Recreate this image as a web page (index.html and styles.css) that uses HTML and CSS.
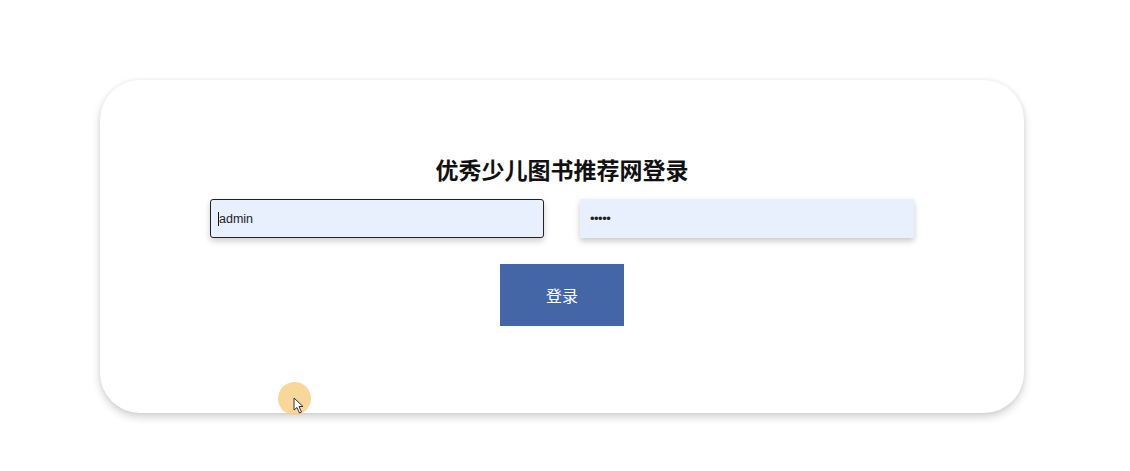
FILE: index.html
```html
<!DOCTYPE html>
<html lang="zh">
<head>
<meta charset="utf-8">
<link rel="stylesheet" href="styles.css">
</head>
<body>
<div class="page">
  <div class="card">
    <h1 class="title">优秀少儿图书推荐网登录</h1>
    <div class="fields">
      <div class="input focused"><span class="caret"></span>admin</div>
      <div class="input pw">•••••</div>
    </div>
    <button class="btn">登录</button>
  </div>
  <div class="cursor-hl">
    <svg class="arrow" width="12" height="17" viewBox="0 0 12 17"><path d="M1 1 L1 13 L4 10.5 L6.5 16 L8.5 15 L6 9.5 L10 9.5 Z" fill="#fff" stroke="#333" stroke-width="1"/></svg>
  </div>
</div>
</body>
</html>
```
FILE: styles.css
```css
html, body { margin: 0; padding: 0; background: #fff; }
body { font-family: "Liberation Sans", "Noto Sans CJK SC", sans-serif; }
.page { position: relative; width: 1130px; height: 471px; padding-top: 80px; padding-left: 100px; box-sizing: border-box; }
.card {
  width: 924px; height: 333px; box-sizing: border-box;
  background: #fff; border-radius: 40px;
  box-shadow: 0 4px 8px rgba(0,0,0,0.18), 0 0 4px rgba(0,0,0,0.06);
  display: flex; flex-direction: column; align-items: center;
  padding-top: 74px;
}
.title { margin: 0; font-size: 23px; line-height: 30px; font-weight: bold; color: #111; font-family: "Noto Sans CJK SC", sans-serif; }
.fields { display: flex; gap: 36px; margin-top: 15px; }
.input {
  width: 334px; height: 39px; box-sizing: border-box;
  background: #e8f0fe; font-size: 12.5px; color: #222;
  display: flex; align-items: center; padding-left: 9px;
  font-family: "Liberation Sans", sans-serif;
}
.focused { border: 1.5px solid #222; border-radius: 3px; box-shadow: 0 3px 6px rgba(0,0,0,0.2); padding-left: 7px; }
.caret { display: inline-block; width: 1px; height: 14px; background: #111; }
.pw { box-shadow: 0 3px 6px rgba(0,0,0,0.22); font-size: 13px; letter-spacing: -0.5px; padding-left: 10px; }
.btn {
  margin-top: 26px; width: 124px; height: 62px; border: none;
  background: #4566a6; color: #fff; font-size: 16px;
  font-family: "Noto Sans CJK SC", sans-serif;
}
.cursor-hl {
  position: absolute; left: 278px; top: 382px; width: 33px; height: 33px;
  border-radius: 50%; background: rgba(248, 205, 130, 0.8);
}
.arrow { position: absolute; left: 15px; top: 15px; }
```
